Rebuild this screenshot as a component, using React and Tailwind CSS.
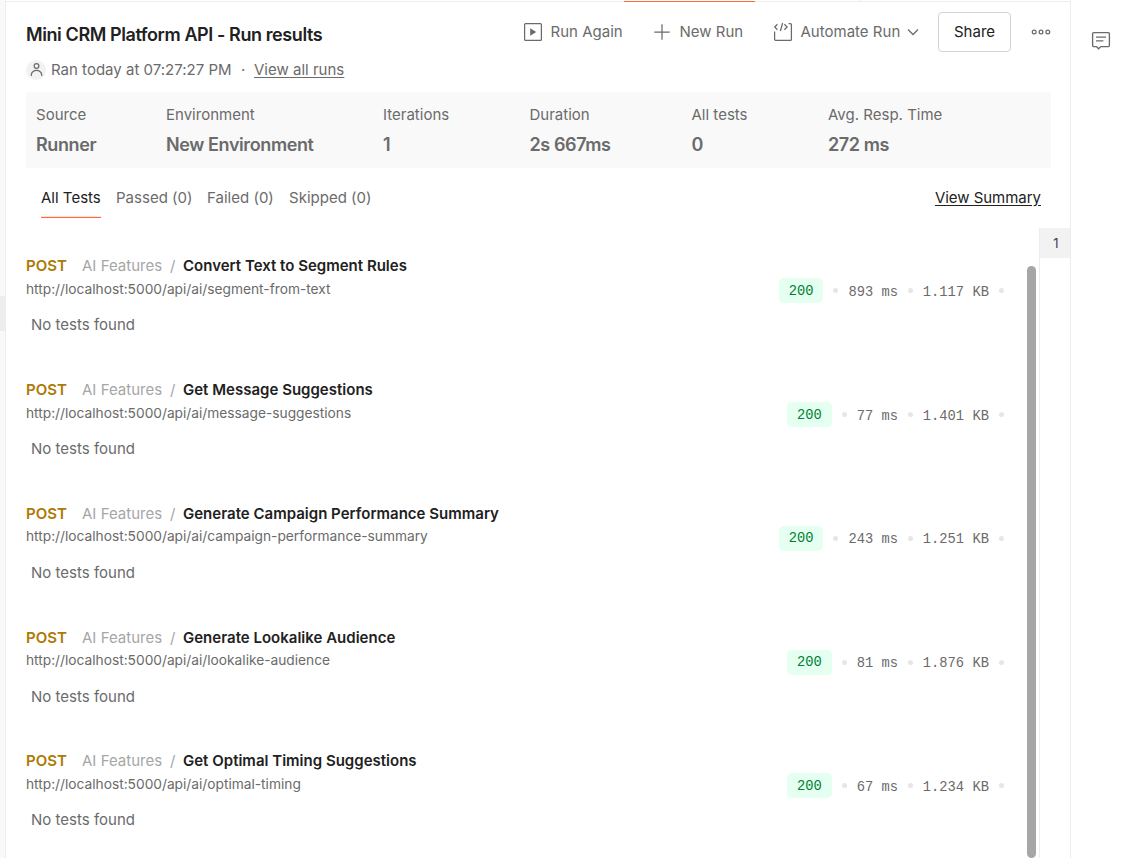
import React from 'react';

const stats = [
  { label: 'Source', value: 'Runner', col: 'w-[130px]' },
  { label: 'Environment', value: 'New Environment', col: 'w-[217px]' },
  { label: 'Iterations', value: '1', col: 'w-[146.5px]' },
  { label: 'Duration', value: '2s 667ms', col: 'w-[162px]' },
  { label: 'All tests', value: '0', col: 'w-[136.5px]' },
  { label: 'Avg. Resp. Time', value: '272 ms', col: 'w-[160px]' },
];

const requests = [
  { name: 'Convert Text to Segment Rules', path: 'segment-from-text', time: '893 ms', size: '1.117 KB' },
  { name: 'Get Message Suggestions', path: 'message-suggestions', time: '77 ms', size: '1.401 KB' },
  { name: 'Generate Campaign Performance Summary', path: 'campaign-performance-summary', time: '243 ms', size: '1.251 KB' },
  { name: 'Generate Lookalike Audience', path: 'lookalike-audience', time: '81 ms', size: '1.876 KB' },
  { name: 'Get Optimal Timing Suggestions', path: 'optimal-timing', time: '67 ms', size: '1.234 KB' },
];

function RunIcon() {
  return (
    <svg className="h-5 w-5 shrink-0" viewBox="0 0 20 20" fill="none" stroke="#6b6b6b" strokeWidth="1.25">
      <rect x="1.6" y="1.6" width="16.8" height="16.8" rx="1" />
      <path d="M7.2 6.2v7.6l6-3.8z" fill="#6b6b6b" stroke="none" />
    </svg>
  );
}

function PlusIcon() {
  return (
    <svg className="h-5 w-5 shrink-0" viewBox="0 0 20 20" stroke="#6b6b6b" strokeWidth="1.25">
      <path d="M10 2.3v15.4M2.3 10h15.4" />
    </svg>
  );
}

function AutomateIcon() {
  return (
    <svg className="h-5 w-5 shrink-0" viewBox="0 0 20 20" fill="none" stroke="#6b6b6b" strokeWidth="1.25">
      <path d="M1.6 9.5v7.9a1 1 0 0 0 1 1h14.8a1 1 0 0 0 1-1V2.6a1 1 0 0 0-1-1h-1.8" />
      <path d="M4.4 2.3 1.7 5l2.7 2.7M9.6 1 7.4 9M11.4 2.3 14.1 5l-2.7 2.7" />
    </svg>
  );
}

function ChevronIcon() {
  return (
    <svg className="h-3 w-3 shrink-0" viewBox="0 0 12 12" fill="none" stroke="#6b6b6b" strokeWidth="1.3">
      <path d="M1 3.5 6 8.5l5-5" />
    </svg>
  );
}

function MoreIcon() {
  return (
    <svg className="h-5 w-5 shrink-0" viewBox="0 0 20 20" fill="none" stroke="#6b6b6b" strokeWidth="1.25">
      <circle cx="3.2" cy="10" r="1.9" />
      <circle cx="10" cy="10" r="1.9" />
      <circle cx="16.8" cy="10" r="1.9" />
    </svg>
  );
}

function UserIcon() {
  return (
    <span className="flex h-5 w-5 shrink-0 items-center justify-center rounded-full bg-[#f2f2f2]">
      <svg className="h-4 w-4" viewBox="0 0 16 16" fill="none" stroke="#6b6b6b" strokeWidth="1.2">
        <circle cx="8.5" cy="4" r="2.4" />
        <path d="M3.3 14v-1.2a5.2 4.4 0 0 1 10.4 0V14" />
      </svg>
    </span>
  );
}

function CommentIcon() {
  return (
    <svg className="h-5 w-5" viewBox="0 0 20 20" fill="none" stroke="#6b6b6b" strokeWidth="1.35">
      <path d="M2.6 1.6h14.8a1 1 0 0 1 1 1v12a1 1 0 0 1-1 1h-7.6l-2.2 2.2-2.2-2.2H2.6a1 1 0 0 1-1-1v-12a1 1 0 0 1 1-1z" />
      <path d="M5 6.1h10M5 9.9h7.4" />
    </svg>
  );
}

function Dot() {
  return <span className="h-[5px] w-[5px] shrink-0 rounded-full bg-[#e6e6e6]" />;
}

function TopBar() {
  return (
    <header className="flex h-[90px] justify-between pl-5">
      <div>
        <h1 className="mt-[21px] h-6 whitespace-nowrap text-[18px] font-semibold leading-6 tracking-[-0.41px] text-[#212121]">
          Mini CRM Platform API - Run results
        </h1>
        <div className="mt-[13px] flex h-5 items-center whitespace-nowrap leading-5 text-[#6b6b6b]">
          <UserIcon />
          <span className="ml-[5px] w-[181px]">Ran today at 07:27:27 PM</span>
          <span className="ml-[9px] w-[13px]">·</span>
          <a className="underline underline-offset-2">View all runs</a>
        </div>
      </div>
      <div className="mt-[10px] flex h-10 items-center whitespace-nowrap text-[#6b6b6b]">
        <div className="flex w-[129px] items-center gap-[7.5px]"><RunIcon />Run Again</div>
        <div className="flex w-[121px] items-center gap-[7.5px]"><PlusIcon />New Run</div>
        <div className="flex w-[165px] items-center gap-[7px]">
          <AutomateIcon />
          <span className="w-[100px] pl-[0.5px]">Automate Run</span>
          <ChevronIcon />
        </div>
        <button className="h-10 w-[73px] rounded border border-[#d4d4d4] text-[#212121]">Share</button>
        <span className="ml-5 mr-[19px]"><MoreIcon /></span>
      </div>
    </header>
  );
}

function StatsBar() {
  return (
    <section className="ml-5 flex h-[76px] w-[1025px] bg-[#f9f9f9] pl-[10px] pt-[13px] text-[#6b6b6b]">
      {stats.map((s) => (
        <div key={s.label} className={s.col + ' shrink-0 whitespace-nowrap'}>
          <div className="h-5 leading-5">{s.label}</div>
          <div className="mt-[8px] h-6 text-[18px] font-semibold leading-6 tracking-[-0.4px]">{s.value}</div>
        </div>
      ))}
    </section>
  );
}

function Tabs() {
  return (
    <nav className="ml-[35px] mt-[10px] flex h-10 whitespace-nowrap leading-[39px] text-[#6b6b6b]">
      <div className="flex h-10 w-[60px] flex-col text-[#212121]">
        <span className="h-[38px]">All Tests</span>
        <span className="h-px bg-[#ffe2d7]" />
        <span className="h-px bg-[#ff6c37]" />
      </div>
      <div className="ml-[15px] w-[91px]">Passed (0)</div>
      <div className="w-[82px]">Failed (0)</div>
      <div>Skipped (0)</div>
      <a className="ml-auto mr-[29px] tracking-[-0.03px] text-[#212121] underline underline-offset-2">View Summary</a>
    </nav>
  );
}

function RequestRow({ name, path, time, size }) {
  return (
    <article className="flex h-[123.75px] justify-between">
      <div className="whitespace-nowrap">
        <div className="flex h-5 leading-5">
          <span className="w-14 font-semibold text-[#ad7a03]">POST</span>
          <span className="w-[88px] text-[#a6a6a6]">AI Features</span>
          <span className="w-[13px] text-[#a6a6a6]">/</span>
          <span className="font-semibold tracking-[0.01px] text-[#212121]">{name}</span>
        </div>
        <div className="mt-[2.6px] h-5 text-[13.75px] leading-5 tracking-[-0.01px] text-[#6b6b6b]">
          http://localhost:5000/api/ai/{path}
        </div>
        <div className="ml-[5px] mt-[16.4px] h-5 leading-5 text-[#6b6b6b]">No tests found</div>
      </div>
      <div className="mr-[23px] mt-[22px] flex h-[25px] items-center whitespace-nowrap font-['Liberation_Mono',monospace] text-[13.75px] tracking-[0.04px] text-[#6b6b6b]">
        <span className="mr-[10px] flex h-[25px] w-[44.5px] items-center justify-center rounded-[5px] bg-[#e5fff1] pt-[3px] text-[#007f31]">200</span>
        <Dot />
        <span className="mx-[10px] pt-[5px]">{time}</span>
        <Dot />
        <span className="ml-[9.5px] mr-[10px] pt-[5px]">{size}</span>
        <Dot />
      </div>
    </article>
  );
}

export default function App() {
  return (
    <div className="flex h-[858px] w-[1122px] overflow-hidden bg-white font-['Inter',sans-serif] text-[15px] tracking-[0.01px]">
      <aside className="w-[6px] shrink-0 border-r border-[#ededed] bg-[#f9f9f9] pt-[296px]">
        <div className="h-[35px] bg-[#ededed]" />
      </aside>
      <main className="flex w-[1064px] shrink-0 flex-col">
        <div className="flex h-[2px] flex-col">
          <div className="ml-[854px] h-px w-px bg-[#ededed]" />
          <div className="flex h-px bg-[#ededed]">
            <div className="ml-[618px] h-px w-[131px] bg-[#ff6c37]" />
          </div>
        </div>
        <TopBar />
        <StatsBar />
        <Tabs />
        <div className="mt-[10px] flex h-[630px]">
          <section className="ml-5 w-[1001px] shrink-0 overflow-hidden pt-[28.3px]">
            {requests.map((r) => <RequestRow key={r.path} {...r} />)}
          </section>
          <div className="w-[9px] shrink-0 pt-[38px]">
            <div className="h-[592px] rounded-full bg-[#a6a6a6]" />
          </div>
          <div className="ml-[3px] w-[31px] shrink-0 border-l border-[#ededed]">
            <div className="h-[30px] bg-[#f2f2f2] pl-[2px] text-center text-[13px] leading-[30px] text-[#444]">1</div>
          </div>
        </div>
      </main>
      <aside className="flex w-[52px] shrink-0 justify-center border-l border-[#ededed] pl-[9px] pt-[31px]">
        <CommentIcon />
      </aside>
    </div>
  );
}
